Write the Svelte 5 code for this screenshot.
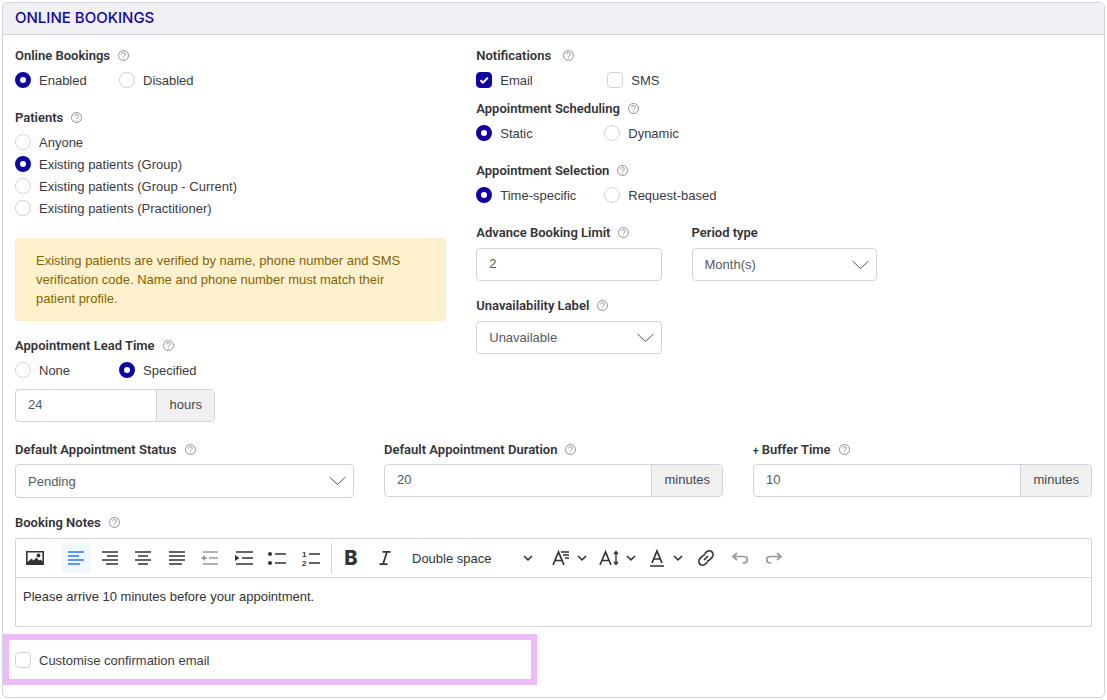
<script>
  let enabled = $state('Enabled');
  let patients = $state('Existing patients (Group)');
  let lead = $state('Specified');
  let scheduling = $state('Static');
  let selection = $state('Time-specific');
  let email = $state(true);
  let sms = $state(false);
  let customise = $state(false);
  let align = $state('left');

  const patientOptions = [
    'Anyone',
    'Existing patients (Group)',
    'Existing patients (Group - Current)',
    'Existing patients (Practitioner)'
  ];

  const alignments = {
    left: 'M0 1H16M0 5H11M0 9H16M0 13H12',
    right: 'M0 1H16M5 5H16M0 9H16M4 13H16',
    center: 'M0 1H16M3 5H13M0 9H16M3 13H13',
    justify: 'M0 1H16M0 5H16M0 9H16M0 13H13'
  };
</script>

{#snippet help()}
  <button class="help" type="button" aria-label="Help">
    <svg width="11" height="11" viewBox="0 0 11 11" aria-hidden="true">
      <circle cx="5.5" cy="5.5" r="5" />
      <path d="M3.7 4.4C3.7 1.9 7.4 2 7.3 4.2C7.2 5.5 5.5 5.4 5.5 6.9M5.5 7.9V8.8" />
    </svg>
  </button>
{/snippet}

{#snippet arrow()}
  <svg class="arrow" width="17" height="10" viewBox="0 0 17 10" aria-hidden="true"><path d="M.5 1L8.5 8.5L16.5 1" /></svg>
{/snippet}

{#snippet caret()}
  <svg class="caret" width="10" height="6" viewBox="0 0 10 6" aria-hidden="true"><path d="M1 1L5 4.8L9 1" /></svg>
{/snippet}

<main class="card">
  <h1>ONLINE BOOKINGS</h1>
  <form class="content">
    <div class="columns">
      <div class="left">
        <div class="label"><span>Online Bookings</span>{@render help()}</div>
        <div class="options">
          {#each ['Enabled', 'Disabled'] as o}
            <label class="choice"><input type="radio" name="enabled" value={o} bind:group={enabled} />{o}</label>
          {/each}
        </div>

        <div class="label next"><span>Patients</span>{@render help()}</div>
        <div class="stack">
          {#each patientOptions as o}
            <label class="choice"><input type="radio" name="patients" value={o} bind:group={patients} />{o}</label>
          {/each}
        </div>

        <p class="alert">
          Existing patients are verified by name, phone number and SMS verification code. Name and phone number must match their patient profile.
        </p>

        <div class="label"><label for="lead">Appointment Lead Time</label>{@render help()}</div>
        <div class="options">
          {#each ['None', 'Specified'] as o}
            <label class="choice"><input type="radio" name="lead" value={o} bind:group={lead} />{o}</label>
          {/each}
        </div>
        <div class="group short"><input id="lead" type="text" value="24" /><span>hours</span></div>
      </div>

      <div class="right">
        <div class="label spaced"><span>Notifications</span>{@render help()}</div>
        <div class="options checks">
          <label class="choice"><input type="checkbox" bind:checked={email} />Email</label>
          <label class="choice"><input type="checkbox" bind:checked={sms} />SMS</label>
        </div>

        <div class="label near"><span>Appointment Scheduling</span>{@render help()}</div>
        <div class="options wide">
          {#each ['Static', 'Dynamic'] as o}
            <label class="choice"><input type="radio" name="scheduling" value={o} bind:group={scheduling} />{o}</label>
          {/each}
        </div>

        <div class="label next"><span>Appointment Selection</span>{@render help()}</div>
        <div class="options wide">
          {#each ['Time-specific', 'Request-based'] as o}
            <label class="choice"><input type="radio" name="selection" value={o} bind:group={selection} />{o}</label>
          {/each}
        </div>

        <div class="thirds fields">
          <div>
            <div class="label"><label for="limit">Advance Booking Limit</label>{@render help()}</div>
            <input class="box" id="limit" type="text" value="2" />
          </div>
          <div>
            <div class="label"><label for="period">Period type</label></div>
            <div class="select"><select id="period"><option>Month(s)</option><option>Week(s)</option></select>{@render arrow()}</div>
          </div>
          <div class="row2">
            <div class="label"><label for="unavailable">Unavailability Label</label>{@render help()}</div>
            <div class="select"><select id="unavailable"><option>Unavailable</option></select>{@render arrow()}</div>
          </div>
        </div>
      </div>
    </div>

    <div class="thirds defaults">
      <div>
        <div class="label"><label for="status">Default Appointment Status</label>{@render help()}</div>
        <div class="select"><select id="status"><option>Pending</option><option>Confirmed</option></select>{@render arrow()}</div>
      </div>
      <div>
        <div class="label"><label for="duration">Default Appointment Duration</label>{@render help()}</div>
        <div class="group"><input id="duration" type="text" value="20" /><span>minutes</span></div>
      </div>
      <div>
        <div class="label"><label for="buffer"><small>+</small> Buffer Time</label>{@render help()}</div>
        <div class="group"><input id="buffer" type="text" value="10" /><span>minutes</span></div>
      </div>
    </div>

    <div class="label notes-label"><label for="notes">Booking Notes</label>{@render help()}</div>
    <div class="editor">
      <div class="toolbar">
        <button type="button" class="tool" aria-label="Insert image">
          <svg width="18" height="14" viewBox="0 0 18 14"><path fill-rule="evenodd" fill="currentColor" d="M0 0H18V14H0ZM1.600 1.600V11L5.500 7.500L7.500 9.500L10.500 6.500L13 9.500L14.500 8.500L16.400 10.500V1.600Z" /><circle cx="12.500" cy="4.500" r="1.900" fill="currentColor" /></svg>
        </button>
        <div class="aligns">
          {#each Object.entries(alignments) as [name, d]}
            <button type="button" class="tool" class:active={align === name} aria-label={`Align ${name}`} onclick={() => (align = name)}>
              <svg class="line" width="16" height="14" viewBox="0 0 16 14"><path {d} /></svg>
            </button>
          {/each}
          <button type="button" class="tool" disabled aria-label="Outdent">
            <svg class="line" width="18" height="14" viewBox="0 0 18 14"><path d="M2 1H17M8 7H17M2 13H17" /><path class="solid" d="M0 7L4 4V10Z" /><path d="M3 7H6" /></svg>
          </button>
          <button type="button" class="tool" aria-label="Indent">
            <svg class="line" width="18" height="14" viewBox="0 0 18 14"><path d="M1 1H18M7 7H18M1 13H18" /><path class="solid" d="M4.500 7L0 4V10Z" /></svg>
          </button>
          <button type="button" class="tool" aria-label="Bulleted list">
            <svg class="line" width="18" height="14" viewBox="0 0 18 14"><path d="M7 3H18M7 12H18" /><circle class="solid" cx="2" cy="3" r="2" /><circle class="solid" cx="2" cy="12" r="2" /></svg>
          </button>
          <button type="button" class="tool" aria-label="Numbered list">
            <svg class="line" width="18" height="16" viewBox="0 0 18 16"><path d="M7 4H18M7 13H18" /><text x="0" y="7">1</text><text x="0" y="16">2</text></svg>
          </button>
        </div>
        <span class="divider"></span>
        <button type="button" class="tool bold" aria-label="Bold">B</button>
        <button type="button" class="tool italic" aria-label="Italic">
          <svg class="line" width="12" height="14" viewBox="0 0 12 14"><path d="M3.500 .8H11.500M.5 13.200H8.500M8 .8L4 13.200" /></svg>
        </button>
        <button type="button" class="style"><span>Double space</span>{@render caret()}</button>
        <button type="button" class="combo" aria-label="Font family">
          <svg class="line" width="18" height="16" viewBox="0 0 18 16"><path d="M1 15L6.500 2L12 15M3 10.500H10" /><path class="fine" d="M9 2H17M11 5H17M13 8H17" /></svg>{@render caret()}
        </button>
        <button type="button" class="combo size" aria-label="Font size">
          <svg class="line" width="20" height="16" viewBox="0 0 20 16"><path d="M1 15L6.500 2L12 15M3 10.500H10" /><path class="fine" d="M17 2V14M15 4L17 1.500L19 4M15 12L17 14.500L19 12" /></svg>{@render caret()}
        </button>
        <button type="button" class="combo colour" aria-label="Text colour">
          <svg class="line" width="14" height="18" viewBox="0 0 14 18"><path d="M2 14L7 2L12 14M4 10H10M0 17H14" /></svg>{@render caret()}
        </button>
        <button type="button" class="tool link" aria-label="Link">
          <svg class="line" width="16" height="16" viewBox="0 0 16 16"><path d="M6.500 4L8.500 2A3.600 3.600 0 0 1 14 7.300L11.500 10A3.500 3.500 0 0 1 8.800 11M9.500 12L7.500 14A3.600 3.600 0 0 1 2 8.700L4.500 6A3.500 3.500 0 0 1 7.200 5M6 10L10 6" /></svg>
        </button>
        <button type="button" class="tool" disabled aria-label="Undo">
          <svg class="line" width="16" height="12" viewBox="0 0 16 12"><path d="M5 1L1 4.500L5 8M1 4.500H12A3.200 3.200 0 0 1 12 11H10.500" /></svg>
        </button>
        <button type="button" class="tool" disabled aria-label="Redo">
          <svg class="line" width="16" height="12" viewBox="0 0 16 12"><path d="M11 1L15 4.500L11 8M15 4.500H4A3.200 3.200 0 0 0 4 11H5.500" /></svg>
        </button>
      </div>
      <textarea id="notes" rows="2">Please arrive 10 minutes before your appointment.</textarea>
    </div>

    <div class="highlight">
      <label class="choice"><input type="checkbox" bind:checked={customise} />Customise confirmation email</label>
    </div>
  </form>
</main>

<style>
  :global(body) {
    margin: 0;
    background: #fff;
  }
  .card, .card * { box-sizing: border-box; }
  .card {
    margin: 2px;
    border: 1px solid #ced4da;
    border-radius: 5px;
    color: #3b3b42;
    font: 13px/19px "Liberation Sans", Arial, sans-serif;
  }
  button, input, select, textarea { font: inherit; color: inherit; }
  h1 {
    margin: 0;
    padding: 5px 12px 6px;
    border-bottom: 1px solid #ced4da;
    border-radius: 4px 4px 0 0;
    background: #f0f0f5;
    color: #10069f;
    font-family: Inter, sans-serif;
    font-size: 15px;
    font-weight: 500;
    line-height: 20px;
  }
  .content { padding: 10px 12px 12px; }
  .columns {
    display: grid;
    grid-template-columns: repeat(12, minmax(0, 1fr));
    column-gap: 30px;
  }
  .left { grid-column: span 5; }
  .right { grid-column: span 7; }
  .thirds {
    display: grid;
    grid-template-columns: repeat(3, minmax(0, 1fr));
    column-gap: 30px;
  }
  .label {
    display: flex;
    align-items: center;
    gap: 8px;
    height: 20px;
    color: #333338;
    font-family: Roboto, sans-serif;
    font-weight: 600;
    white-space: nowrap;
  }
  .spaced { gap: 12px; }
  .next { margin-top: 16px; }
  .near { margin-top: 7px; }
  small { font-size: 10px; line-height: 1; }
  .help {
    display: flex;
    padding: 0;
    border: 0;
    background: none;
  }
  .help svg { fill: none; stroke: #77777d; stroke-width: 0.8; }
  .options {
    display: grid;
    grid-template-columns: 104px auto;
    margin-top: 4px;
  }
  .wide { grid-template-columns: 128px auto; }
  .checks { grid-template-columns: 131px auto; }
  .stack { margin-top: 4px; }
  .choice {
    display: flex;
    align-items: center;
    gap: 8px;
    height: 22px;
  }
  .choice input {
    appearance: none;
    width: 16px;
    height: 16px;
    margin: 0;
    border: 1px solid #ced4da;
    background: #fff;
  }
  .choice input[type='radio'] { border-radius: 50%; }
  .choice input[type='radio']:checked { border: 5px solid #10069f; }
  .choice input[type='checkbox'] { border-radius: 4px; }
  .choice input[type='checkbox']:checked {
    border-color: #10069f;
    background: #10069f url("data:image/svg+xml,%3Csvg xmlns='http://www.w3.org/2000/svg' viewBox='0 0 14 14'%3E%3Cpath d='M3.500 7.200L6 9.700L10.800 4.800' fill='none' stroke='white' stroke-width='2'/%3E%3C/svg%3E");
  }
  .alert {
    margin: 19px 0 14px;
    padding: 12px 20px;
    border: 1px solid #ffeebd;
    border-radius: 4px;
    background: #fff1cd;
    color: #856404;
  }
  .box, .select select, .group {
    width: 100%;
    height: 33px;
    border: 1px solid #ced4da;
    border-radius: 4px;
    background: #fff;
    color: #55595f;
  }
  .box {
    display: block;
    margin-top: 6px;
    padding: 0 12px 2px;
  }
  .select {
    display: grid;
    align-items: center;
    margin-top: 6px;
  }
  .select > :global(*) { grid-area: 1 / 1; }
  .select select { appearance: none; padding: 0 32px 0 12px; }
  .arrow {
    justify-self: end;
    margin-right: 8px;
    fill: none;
    stroke: #4d5566;
    pointer-events: none;
  }
  .group {
    display: flex;
    margin-top: 5px;
    overflow: hidden;
  }
  .group input {
    flex: 1;
    min-width: 0;
    padding: 0 12px 2px;
    border: 0;
    background: none;
  }
  .group span {
    padding: 5px 12px 7px;
    border-left: 1px solid #ced4da;
    background: #f0f0f0;
    color: #44484e;
  }
  .short { width: 200px; margin-top: 8px; }
  .fields { margin-top: 16px; row-gap: 14px; }
  .row2 { grid-column: 1; }
  .defaults { margin-top: 17px; }
  .defaults .select { margin-top: 5px; }
  .defaults .select select { height: 34px; }
  .notes-label { margin-top: 14px; }
  .editor {
    margin-top: 6px;
    border: 1px solid #ced4da;
    border-radius: 2px;
    color: #333;
  }
  .toolbar {
    display: flex;
    align-items: center;
    height: 39px;
    padding-left: 4px;
    border-bottom: 1px solid #ced4da;
  }
  .toolbar button {
    display: flex;
    flex: none;
    align-items: center;
    justify-content: center;
    height: 30px;
    padding: 0;
    border: 0;
    border-radius: 2px;
    background: none;
  }
  .toolbar .tool { width: 30px; }
  .toolbar .active { background: #f0f7ff; color: #2977ff; }
  .toolbar button:disabled { color: #999; }
  .aligns {
    display: flex;
    justify-content: space-between;
    width: 265px;
    margin-left: 11px;
  }
  .line {
    fill: none;
    stroke: currentColor;
    stroke-width: 1.7;
    overflow: visible;
  }
  .line .fine { stroke-width: 1.4; }
  .line .solid { fill: currentColor; stroke: none; }
  .line text { fill: currentColor; stroke: none; font-size: 8px; font-weight: 700; }
  .divider {
    width: 1px;
    height: 31px;
    margin: 0 4px 0 5px;
    background: #ced4da;
  }
  .toolbar .bold { font-family: Inter, sans-serif; font-size: 20px; font-weight: 800; }
  .toolbar .italic { margin-left: 4px; }
  .toolbar .style {
    justify-content: space-between;
    width: 121px;
    margin-left: 12px;
  }
  .caret { fill: none; stroke: #333; stroke-width: 1.6; }
  .toolbar .combo { gap: 7px; margin-left: 19px; }
  .toolbar .size { margin-left: 12px; }
  .toolbar .colour { gap: 9px; margin-left: 14px; }
  .toolbar .link { margin-left: 8px; }
  .toolbar .link ~ .tool { margin-left: 4px; }
  textarea {
    display: block;
    width: 100%;
    height: 48px;
    padding: 9px 7px;
    border: 0;
    background: none;
    resize: none;
  }
  .highlight {
    width: calc(50% - 5px);
    margin: 7px 0 0 -12px;
    padding: 9px 6px 8px;
    border: 6px solid #ebbbfa;
  }
</style>
